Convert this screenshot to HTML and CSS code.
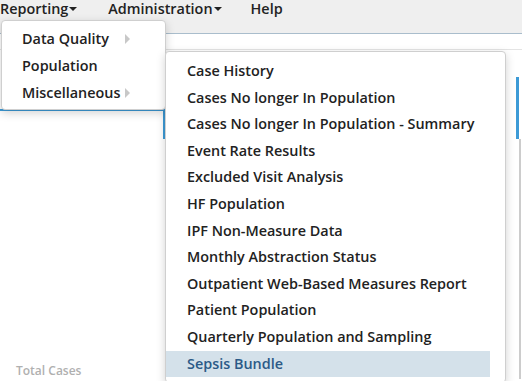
FILE: index.html
```html
<!DOCTYPE html>
<html lang="en">
<head>
  <meta charset="UTF-8" />
  <meta name="viewport" content="width=device-width, initial-scale=1.0"/>
  <title>Reports</title>
  <link rel="stylesheet" href="styles.css">
</head>
<body>
  <nav class="topnav">
    <span class="nav-item">Reporting<span class="caret"></span></span>
    <span class="nav-item admin">Administration<span class="caret"></span></span>
    <span class="nav-item help">Help</span>
  </nav>

  <div class="page">
    <div class="toolbar"></div>
    <div class="filter-box"></div>
    <div class="content">
      <div class="footer-text">Total Cases</div>
    </div>
  </div>

  <ul class="menu menu-main">
    <li>Data Quality<span class="arrow"></span></li>
    <li>Population</li>
    <li>Miscellaneous<span class="arrow"></span></li>
  </ul>

  <ul class="menu menu-sub">
    <li>Case History</li>
    <li>Cases No longer In Population</li>
    <li>Cases No longer In Population - Summary</li>
    <li>Event Rate Results</li>
    <li>Excluded Visit Analysis</li>
    <li>HF Population</li>
    <li>IPF Non-Measure Data</li>
    <li>Monthly Abstraction Status</li>
    <li>Outpatient Web-Based Measures Report</li>
    <li>Patient Population</li>
    <li>Quarterly Population and Sampling</li>
    <li class="active">Sepsis Bundle</li>
  </ul>
</body>
</html>
```

FILE: styles.css
```css
body {
  margin: 0;
  font-family: "Open Sans", "Liberation Sans", sans-serif;
  font-size: 14.4px;
  font-weight: 600;
  color: #222;
  background: #fff;
  overflow: hidden;
  height: 381px;
}

.topnav {
  display: flex;
  height: 34px;
  background: #efefef;
  border-bottom: 1px solid #a9bdcc;
  box-sizing: border-box;
}

.nav-item {
  line-height: 18px;
  display: flex;
  align-items: center;
  align-self: flex-start;
}

.admin {
  margin-left: 31px;
}

.help {
  margin-left: 29px;
}

.caret {
  display: inline-block;
  width: 0;
  height: 0;
  margin-left: 1px;
  border-left: 4px solid transparent;
  border-right: 4px solid transparent;
  border-top: 4px solid #222;
}

.page {
  position: relative;
}

.toolbar {
  height: 15px;
  border-bottom: 1px solid #e4e4e4;
}

.filter-box {
  position: relative;
  margin-top: 27px;
  height: 62px;
  border-right: 3px solid #3c9ad6;
  margin-right: 3px;
}

/* lower strip of the filter panel, seen under the first menu */
.filter-box::before {
  content: "";
  position: absolute;
  left: 0;
  top: 32px;
  width: 166px;
  height: 30px;
  border-top: 2px solid #3c9ad6;
  border-right: 3px solid #3c9ad6;
  box-sizing: border-box;
}

.content {
  height: 240px;
  border-right: 2px solid #ccc;
  margin-right: 1px;
  position: relative;
}

.footer-text {
  position: absolute;
  left: 16px;
  bottom: 1px;
  color: #b0b0b0;
  font-size: 12px;
  line-height: 14px;
}

.menu {
  position: absolute;
  list-style: none;
  margin: 0;
  background: #fff;
  border: 1px solid #cfcfcf;
  border-radius: 4px;
  box-shadow: 0 3px 10px rgba(0, 0, 0, 0.18);
  box-sizing: border-box;
}

.menu li {
  position: relative;
  white-space: nowrap;
}

.menu-main {
  left: 1px;
  top: 20px;
  width: 165px;
  padding: 4px 0 3px 20px;
}

.menu-main li {
  line-height: 27px;
}

.arrow {
  position: absolute;
  left: 103px;
  top: 9px;
  width: 0;
  height: 0;
  border-top: 5px solid transparent;
  border-bottom: 5px solid transparent;
  border-left: 5px solid #c8c8c8;
}

.menu-sub {
  left: 165px;
  top: 51px;
  width: 341px;
  height: 332px;
  padding: 6px 15px 0 0;
}

.menu-sub li {
  line-height: 26.6px;
  padding-left: 21px;
}

.menu-sub li.active {
  background: #d4e1ea;
  color: #2b5a87;
}
```
